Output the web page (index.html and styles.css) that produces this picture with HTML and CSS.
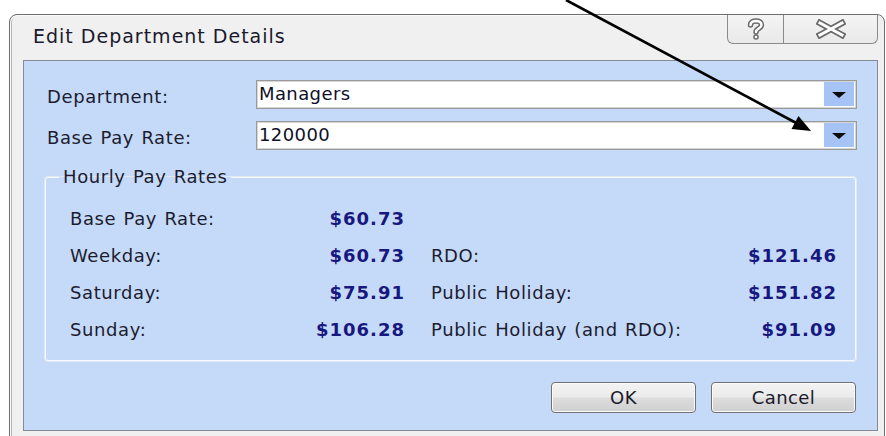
FILE: index.html
```html
<!DOCTYPE html>
<html lang="en">
<head>
<meta charset="utf-8">
<title>Edit Department Details</title>
<link rel="stylesheet" href="styles.css">
</head>
<body>
<div class="window">
  <div class="titlebar">
    <div class="title">Edit Department Details</div>
    <div class="caption-buttons">
      <div class="cap-btn cap-help">
        <svg width="22" height="24" viewBox="0 0 22 24">
          <g fill="none" stroke-linecap="round" stroke-linejoin="round">
            <path d="M5.5 8 C5.5 2.5 16.5 2.5 16.5 8 C16.5 11.5 11 11.5 11 15" stroke="#6b6b6b" stroke-width="5.5"/>
            <path d="M5.5 8 C5.5 2.5 16.5 2.5 16.5 8 C16.5 11.5 11 11.5 11 15" stroke="#ffffff" stroke-width="2.5"/>
          </g>
          <circle cx="11" cy="20" r="2.8" fill="#6b6b6b"/>
          <circle cx="11" cy="20" r="1.3" fill="#ffffff"/>
        </svg>
      </div>
      <div class="cap-btn cap-close">
        <svg width="30" height="20" viewBox="0 0 30 20">
          <g fill="none" stroke-linecap="square">
            <path d="M4 4 L26 16 M4 16 L26 4" stroke="#6b6b6b" stroke-width="6.5"/>
            <path d="M4 4 L26 16 M4 16 L26 4" stroke="#ffffff" stroke-width="3"/>
          </g>
        </svg>
      </div>
    </div>
  </div>

  <div class="panel">
    <div class="form">
      <label class="form-label">Department:</label>
      <div class="combo">
        <span class="combo-value">Managers</span>
        <span class="combo-btn"><span class="caret"></span></span>
      </div>
      <label class="form-label">Base Pay Rate:</label>
      <div class="combo">
        <span class="combo-value">120000</span>
        <span class="combo-btn"><span class="caret"></span></span>
      </div>
    </div>

    <fieldset class="group">
      <legend>Hourly Pay Rates</legend>
      <div class="rates">
        <span class="rate-label">Base Pay Rate:</span><span class="rate-value">$60.73</span><span class="rate-label second"></span><span class="rate-value"></span>
        <span class="rate-label">Weekday:</span><span class="rate-value">$60.73</span><span class="rate-label second">RDO:</span><span class="rate-value">$121.46</span>
        <span class="rate-label">Saturday:</span><span class="rate-value">$75.91</span><span class="rate-label second">Public Holiday:</span><span class="rate-value">$151.82</span>
        <span class="rate-label">Sunday:</span><span class="rate-value">$106.28</span><span class="rate-label second">Public Holiday (and RDO):</span><span class="rate-value">$91.09</span>
      </div>
    </fieldset>

    <div class="actions">
      <button class="btn" type="button">OK</button>
      <button class="btn" type="button">Cancel</button>
    </div>
  </div>
</div>

<svg class="annotation" width="886" height="436" viewBox="0 0 886 436">
  <line x1="566" y1="0" x2="800" y2="125" stroke="#000" stroke-width="2.6"/>
  <polygon points="811,131 791.5,129 798.5,116" fill="#000"/>
</svg>
</body>
</html>
```

FILE: styles.css
```css
* {
  box-sizing: border-box;
}

html, body {
  margin: 0;
  padding: 0;
}

body {
  width: 886px;
  height: 436px;
  overflow: hidden;
  background: #ffffff;
  position: relative;
  font-family: "DejaVu Sans", Verdana, sans-serif;
  font-size: 18px;
  color: #1c1c30;
}

/* dialog frame */
.window {
  margin: 14px 0 0 9px;
  width: 876px;
  height: 440px;
  background: #f0f0f0;
  border: 1px solid #6e6e6e;
  border-radius: 8px 8px 0 0;
  box-shadow: inset 1px 1px 0 #fbfbfb, inset 2px 0 0 #b4b4b4;
}

.titlebar {
  display: flex;
  align-items: flex-start;
  height: 45px;
}

.title {
  flex: 1;
  padding: 10px 0 0 23px;
  font-size: 19px;
  letter-spacing: 1px;
  color: #1a1a2c;
  white-space: nowrap;
}

.caption-buttons {
  display: flex;
  margin-right: 6px;
  height: 29px;
  border: 1px solid #8a8a8a;
  border-top: none;
  border-radius: 0 0 6px 6px;
  background: linear-gradient(#f4f4f4, #e9e9e9);
  overflow: hidden;
}

.cap-btn {
  display: flex;
  align-items: center;
  justify-content: center;
  height: 100%;
}

.cap-help {
  width: 56px;
  border-right: 1px solid #8a8a8a;
}

.cap-close {
  width: 93px;
}

/* blue client area */
.panel {
  margin: 0 6px 0 13px;
  height: 371px;
  background: #c5daf8;
  border: 1px solid #858b93;
  padding: 19px 21px 17px;
}

.form {
  display: grid;
  grid-template-columns: 209px 601px;
  row-gap: 12px;
  padding-left: 2px;
  margin-right: -2px;
}

.form-label {
  align-self: start;
  margin-top: 6px;
  letter-spacing: 0.6px;
  word-spacing: 1px;
  white-space: nowrap;
}

.combo {
  display: flex;
  align-items: stretch;
  height: 29px;
  background: #ffffff;
  border: 1px solid #9a9a9a;
  box-shadow: inset 0 0 0 1px #d6d6d6;
  padding: 1px 2px 2px 2px;
}

.combo-value {
  flex: 1;
  display: flex;
  align-items: center;
  padding-bottom: 2px;
  letter-spacing: 0.4px;
  color: #10102a;
}

.combo-btn {
  width: 30px;
  display: flex;
  align-items: center;
  justify-content: center;
  background: #a5c3f5;
}

.caret {
  width: 0;
  height: 0;
  margin-top: 2px;
  border-left: 7px solid transparent;
  border-right: 7px solid transparent;
  border-top: 6px solid #0a0a0a;
}

/* hourly pay rate group */
.group {
  margin: 17px 0 0 0;
  padding: 13px 0 12px 0;
  border: 1px solid #f7faff;
  border-radius: 3px;
  box-shadow: 0 0 0 1px #dfe8f5;
  min-width: 0;
}

.group legend {
  margin-left: 13px;
  padding: 0 4px;
  line-height: 20px;
  letter-spacing: 0.6px;
  word-spacing: 1px;
}

.rates {
  display: grid;
  grid-template-columns: 210px 125px 306px 126px;
  grid-auto-rows: 37px;
  align-items: center;
  margin: 0 17px 0 24px;
}

.rate-label {
  letter-spacing: 0.6px;
  word-spacing: 1px;
  white-space: nowrap;
}

.rate-label.second {
  padding-left: 26px;
}

.rate-value {
  text-align: right;
  font-weight: bold;
  letter-spacing: 1px;
  color: #17177f;
}

/* dialog buttons */
.actions {
  display: flex;
  justify-content: flex-end;
  gap: 15px;
  margin-top: 21px;
}

.btn {
  width: 145px;
  height: 31px;
  padding: 0;
  font-family: "DejaVu Sans", Verdana, sans-serif;
  font-size: 18px;
  letter-spacing: 0.4px;
  color: #1a1a2c;
  border: 1px solid #707070;
  border-radius: 4px;
  background: linear-gradient(#f3f3f3 0%, #ebebeb 48%, #dddddd 52%, #cfcfcf 100%);
  box-shadow: inset 0 0 0 1px #fcfcfc;
}

/* callout arrow drawn over the dialog */
.annotation {
  position: absolute;
  top: 0;
  left: 0;
  pointer-events: none;
}
```
